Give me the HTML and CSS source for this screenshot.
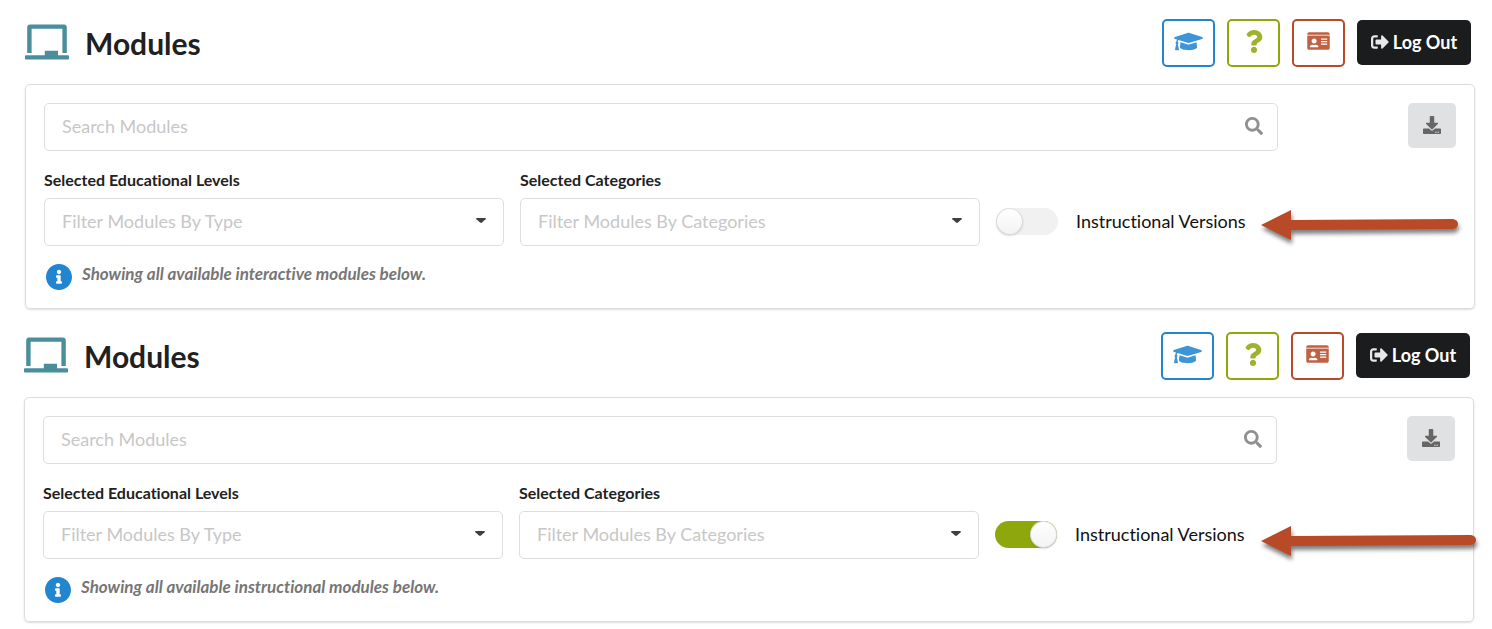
FILE: index.html
```
<!DOCTYPE html>
<html lang="en">
<head>
    <meta charset="UTF-8">
    <meta name="viewport" content="width=device-width, initial-scale=1.0">
    <title>Modules</title>
    <link rel="stylesheet" href="styles.css">
</head>
<body>
    <svg class="sprite" aria-hidden="true">
        <symbol id="board" viewBox="0 0 640 512"><path d="M96 64h448v352h64V40c0-22.06-17.94-40-40-40H72C49.94 0 32 17.94 32 40v376h64V64zm528 384H480v-64H288v64H16c-8.84 0-16 7.16-16 16v32c0 8.84 7.16 16 16 16h608c8.84 0 16-7.16 16-16v-32c0-8.84-7.16-16-16-16z"/></symbol>
        <symbol id="cap" viewBox="0 0 640 512"><path d="M622.34 153.2L343.4 67.5c-15.2-4.67-31.6-4.67-46.79 0L17.66 153.2c-23.54 7.23-23.54 38.36 0 45.59l48.63 14.94c-10.67 13.19-17.23 29.28-17.88 46.9C38.78 266.15 32 276.11 32 288c0 10.78 5.68 19.85 13.86 25.65L20.33 428.53C18.11 438.52 25.71 448 35.94 448h56.11c10.24 0 17.84-9.48 15.62-19.47L82.14 313.65C90.32 307.85 96 298.78 96 288c0-11.57-6.47-21.25-15.66-26.87.76-15.02 8.44-28.3 20.69-36.72L296.6 284.5c9.06 2.78 26.44 6.25 46.79 0l278.95-85.7c23.55-7.24 23.55-38.36 0-45.6zM352.79 315.09c-28.53 8.76-52.84 3.92-65.59 0l-145.02-44.55L128 384c0 35.35 85.96 64 192 64s192-28.65 192-64l-14.18-113.47-145.03 44.56z"/></symbol>
        <symbol id="question" viewBox="0 0 384 512"><path d="M202.021 0C122.202 0 70.503 32.703 29.914 91.026c-7.363 10.58-5.093 25.086 5.178 32.874l43.138 32.709c10.373 7.865 25.132 6.026 33.253-4.148 25.049-31.381 43.63-49.449 82.757-49.449 30.764 0 68.816 19.799 68.816 49.631 0 22.552-18.617 34.134-48.993 51.164-35.423 19.86-82.299 44.576-82.299 106.405V320c0 13.255 10.745 24 24 24h72.471c13.255 0 24-10.745 24-24v-5.773c0-42.86 125.268-44.645 125.268-160.627C377.504 66.256 286.902 0 202.021 0zM192 373.459c-38.196 0-69.271 31.075-69.271 69.271 0 38.195 31.075 69.27 69.271 69.27s69.271-31.075 69.271-69.271-31.075-69.27-69.271-69.27z"/></symbol>
        <symbol id="id-card" viewBox="0 0 576 512"><path opacity="0.45" d="M0 96h576v32H0z"/><path fill-rule="evenodd" d="M528 32H48C21.5 32 0 53.5 0 80v16h576V80c0-26.5-21.5-48-48-48zM0 432c0 26.5 21.5 48 48 48h480c26.5 0 48-21.5 48-48V128H0v304zM360 192h144q8 0 8 8v16q0 8-8 8H360q-8 0-8-8v-16q0-8 8-8zM360 256h144q8 0 8 8v16q0 8-8 8H360q-8 0-8-8v-16q0-8 8-8zM360 320h144q8 0 8 8v16q0 8-8 8H360q-8 0-8-8v-16q0-8 8-8zM176 192c35.3 0 64 28.7 64 64s-28.7 64-64 64-64-28.7-64-64 28.7-64 64-64zM67.1 396.2C75.5 370.5 99.6 352 128 352h8.2c12.3 5.1 25.7 8 39.8 8s27.6-2.9 39.8-8h8.2c28.4 0 52.5 18.5 60.9 44.2 3.2 9.9-5.2 19.8-15.6 19.8H82.7c-10.4 0-18.8-10-15.6-19.8z"/></symbol>
        <symbol id="sign-out" viewBox="0 0 512 512"><path d="M497 273L329 441c-15 15-41 4.5-41-17v-96H152c-13.3 0-24-10.7-24-24v-96c0-13.3 10.7-24 24-24h136V88c0-21.4 25.9-32 41-17l168 168c9.3 9.4 9.3 24.6 0 34zM192 436v-40c0-6.6-5.4-12-12-12H96c-17.7 0-32-14.3-32-32V160c0-17.7 14.3-32 32-32h84c6.6 0 12-5.4 12-12V76c0-6.6-5.4-12-12-12H96c-53 0-96 43-96 96v192c0 53 43 96 96 96h84c6.6 0 12-5.4 12-12z"/></symbol>
        <symbol id="search" viewBox="0 0 512 512"><path d="M505 442.7L405.3 343c-4.5-4.5-10.6-7-17-7H372c27.6-35.3 44-79.7 44-128C416 93.1 322.9 0 208 0S0 93.1 0 208s93.1 208 208 208c48.3 0 92.7-16.4 128-44v16.3c0 6.4 2.5 12.5 7 17l99.7 99.7c9.4 9.4 24.6 9.4 33.9 0l28.3-28.3c9.4-9.4 9.4-24.6.1-34zM208 336c-70.7 0-128-57.2-128-128 0-70.7 57.2-128 128-128 70.7 0 128 57.2 128 128 0 70.7-57.2 128-128 128z"/></symbol>
        <symbol id="download" viewBox="0 0 512 512"><path d="M216 0h80c13.3 0 24 10.7 24 24v168h87.7c17.8 0 26.7 21.5 14.1 34.1L269.7 378.3c-7.5 7.5-19.8 7.5-27.3 0L90.1 226.1c-12.6-12.6-3.7-34.1 14.1-34.1H192V24c0-13.3 10.7-24 24-24zm296 376v112c0 13.3-10.7 24-24 24H24c-13.3 0-24-10.7-24-24V376c0-13.3 10.7-24 24-24h146.7l49 49c20.1 20.1 52.5 20.1 72.6 0l49-49H488c13.3 0 24 10.7 24 24zm-124 88c0-11-9-20-20-20s-20 9-20 20 9 20 20 20 20-9 20-20zm64 0c0-11-9-20-20-20s-20 9-20 20 9 20 20 20 20-9 20-20z"/></symbol>
        <symbol id="caret" viewBox="0 0 10 6"><path d="M1 0h8q1.500 0 .6 1.300L6 4.600q-1 .8-2 0L.4 1.300Q-.5 0 1 0z"/></symbol>
        <symbol id="info" viewBox="8 8 496 496"><path d="M256 8C119.043 8 8 119.083 8 256c0 136.997 111.043 248 248 248s248-111.003 248-248C504 119.083 392.957 8 256 8zm0 110c23.196 0 42 18.804 42 42s-18.804 42-42 42-42-18.804-42-42 18.804-42 42-42zm56 254c0 6.627-5.373 12-12 12h-88c-6.627 0-12-5.373-12-12v-24c0-6.627 5.373-12 12-12h12v-64h-12c-6.627 0-12-5.373-12-12v-24c0-6.627 5.373-12 12-12h64c6.627 0 12 5.373 12 12v100h12c6.627 0 12 5.373 12 12v24z"/></symbol>
    </svg>

    <section class="screen">
        <header class="header">
            <svg class="logo"><use href="#board"/></svg>
            <h1>Modules</h1>
            <button class="btn blue" aria-label="Courses"><svg class="cap-icon"><use href="#cap"/></svg></button>
            <button class="btn green" aria-label="Help"><svg class="question-icon"><use href="#question"/></svg></button>
            <button class="btn red" aria-label="Profile"><svg class="card-icon"><use href="#id-card"/></svg></button>
            <button class="logout"><svg><use href="#sign-out"/></svg>Log Out</button>
        </header>
        <div class="panel">
            <div class="search-row">
                <div class="control search">
                    <input type="text" placeholder="Search Modules" aria-label="Search Modules">
                    <svg class="search-icon"><use href="#search"/></svg>
                </div>
                <button class="download" aria-label="Download"><svg><use href="#download"/></svg></button>
            </div>
            <div class="filters">
                <div class="field">
                    <label for="levels-1">Selected Educational Levels</label>
                    <div class="control">
                        <select id="levels-1"><option>Filter Modules By Type</option></select>
                        <svg class="caret"><use href="#caret"/></svg>
                    </div>
                </div>
                <div class="field">
                    <label for="categories-1">Selected Categories</label>
                    <div class="control">
                        <select id="categories-1"><option>Filter Modules By Categories</option></select>
                        <svg class="caret"><use href="#caret"/></svg>
                    </div>
                </div>
                <label class="toggle"><input type="checkbox">Instructional Versions</label>
            </div>
            <p class="message"><svg><use href="#info"/></svg><em>Showing all available interactive modules below.</em></p>
        </div>
        <svg class="arrow arrow-off" viewBox="0 0 197 30" aria-hidden="true">
            <path d="M0 15L30 0v10L192 9q5 1 5 5t-5 5L30 20v10z"/>
        </svg>
    </section>

    <section class="screen">
        <header class="header">
            <svg class="logo"><use href="#board"/></svg>
            <h1>Modules</h1>
            <button class="btn blue" aria-label="Courses"><svg class="cap-icon"><use href="#cap"/></svg></button>
            <button class="btn green" aria-label="Help"><svg class="question-icon"><use href="#question"/></svg></button>
            <button class="btn red" aria-label="Profile"><svg class="card-icon"><use href="#id-card"/></svg></button>
            <button class="logout"><svg><use href="#sign-out"/></svg>Log Out</button>
        </header>
        <div class="panel">
            <div class="search-row">
                <div class="control search">
                    <input type="text" placeholder="Search Modules" aria-label="Search Modules">
                    <svg class="search-icon"><use href="#search"/></svg>
                </div>
                <button class="download" aria-label="Download"><svg><use href="#download"/></svg></button>
            </div>
            <div class="filters">
                <div class="field">
                    <label for="levels-2">Selected Educational Levels</label>
                    <div class="control">
                        <select id="levels-2"><option>Filter Modules By Type</option></select>
                        <svg class="caret"><use href="#caret"/></svg>
                    </div>
                </div>
                <div class="field">
                    <label for="categories-2">Selected Categories</label>
                    <div class="control">
                        <select id="categories-2"><option>Filter Modules By Categories</option></select>
                        <svg class="caret"><use href="#caret"/></svg>
                    </div>
                </div>
                <label class="toggle"><input type="checkbox" checked>Instructional Versions</label>
            </div>
            <p class="message"><svg><use href="#info"/></svg><em>Showing all available instructional modules below.</em></p>
        </div>
        <svg class="arrow arrow-on" viewBox="0 0 215 30" aria-hidden="true">
            <path d="M0 15L30 0v10L210 9q5 1 5 5t-5 5L30 20v10z"/>
        </svg>
    </section>
</body>
</html>
```

FILE: styles.css
```
* {
    box-sizing: border-box;
}
body {
    margin: 0;
    background: #fff;
    color: #212121;
    font-family: Lato, "Liberation Sans", sans-serif;
    font-size: 18px;
    font-variant-ligatures: none;
}
button, input, select {
    font: inherit;
    font-variant-ligatures: none;
}
button {
    cursor: pointer;
}
svg {
    fill: currentColor;
    flex: none;
}
.sprite {
    display: none;
}
.screen {
    position: relative;
    padding: 19px 17px 4px 25px;
}
.screen + .screen {
    padding-right: 18px;
    padding-left: 24px;
}
.header {
    display: flex;
    align-items: flex-start;
    gap: 12px;
    padding-right: 4px;
    height: 65px;
}
.logo {
    width: 44px;
    height: 36px;
    margin-top: 5px;
    color: #4a8d9b;
}
h1 {
    flex: 1;
    margin: 5px 0 0 4px;
    font-size: 30px;
    line-height: 38px;
    font-weight: 700;
}
.btn {
    display: flex;
    justify-content: center;
    align-items: center;
    width: 53px;
    height: 48px;
    padding: 0 0 4px;
    background: #fff;
    border: 2px solid;
    border-radius: 5px;
}
.btn svg {
    opacity: 0.87;
}
.blue {
    color: #2185d0;
}
.green {
    color: #8ea80c;
}
.red {
    color: #b84a28;
}
.cap-icon {
    width: 29px;
    height: 23px;
}
.question-icon {
    width: 18px;
    height: 23px;
}
.card-icon {
    width: 23px;
    height: 20px;
}
.logout {
    display: flex;
    align-items: center;
    justify-content: center;
    gap: 4px;
    width: 114px;
    height: 45px;
    margin-top: 1px;
    padding: 0 0 2px;
    border: none;
    border-radius: 5px;
    background: #1b1c1d;
    color: #fff;
    font-weight: 700;
    white-space: nowrap;
}
.logout svg {
    width: 18px;
    height: 18px;
    opacity: 0.9;
}
.panel {
    padding: 18px;
    border: 1px solid #dcdddd;
    border-radius: 5px;
    box-shadow: 0 1px 2px rgba(34, 36, 38, 0.15);
}
.search-row {
    display: grid;
    grid-template-columns: repeat(16, 1fr);
    gap: 16px;
}
.search {
    grid-column: span 14;
}
.control {
    position: relative;
}
.control input, .control select {
    display: block;
    width: 100%;
    height: 48px;
    padding: 0 17px 2px;
    border: 1px solid #dededf;
    border-radius: 5px;
    background: #fff;
    color: #c7c7c7;
    appearance: none;
}
.control input::placeholder {
    color: #c7c7c7;
}
.control svg {
    position: absolute;
    top: 0;
    bottom: 2px;
    margin: auto 0;
    pointer-events: none;
}
.search-icon {
    right: 15px;
    width: 18px;
    height: 18px;
    color: #909090;
}
.caret {
    right: 18px;
    width: 10px;
    height: 6px;
    color: #404040;
}
.download {
    grid-column: span 2;
    justify-self: end;
    width: 48px;
    height: 45px;
    padding: 0 0 1px;
    border: none;
    border-radius: 5px;
    background: #e0e1e2;
    color: #666;
}
.download svg {
    display: block;
    width: 18px;
    height: 18px;
    margin: auto;
}
.filters {
    display: grid;
    grid-template-columns: repeat(3, 1fr);
    gap: 16px;
    margin-top: 18px;
}
.field label {
    display: block;
    margin-bottom: 7px;
    font-size: 16px;
    line-height: 22px;
    font-weight: 700;
}
.toggle {
    display: flex;
    align-items: center;
    align-self: end;
    gap: 18px;
    height: 48px;
    padding-bottom: 2px;
    color: #111;
    cursor: pointer;
}
.toggle input {
    display: flex;
    width: 62px;
    height: 27px;
    margin: 0;
    border-radius: 14px;
    background: #f1f1f1;
    appearance: none;
}
.toggle input::before {
    content: "";
    width: 27px;
    height: 27px;
    border-radius: 50%;
    background: linear-gradient(#fff, #f3f3f3);
    box-shadow: 0 1px 2px rgba(34, 36, 38, 0.15), inset 0 0 0 1px rgba(34, 36, 38, 0.15);
}
.toggle input:checked {
    justify-content: flex-end;
    background: #8ea80c;
}
.message {
    display: flex;
    gap: 10px;
    margin: 17px 0 0;
    padding-left: 2px;
    color: #767676;
    font-size: 17px;
    font-weight: 700;
    line-height: 22px;
}
.message svg {
    width: 26px;
    height: 26px;
    margin-top: 1px;
    color: #2185d0;
}
.arrow {
    position: absolute;
    left: 1261px;
    height: 30px;
    overflow: visible;
    color: #b84a28;
    filter: drop-shadow(1px 4px 2px rgba(0, 0, 0, 0.5));
}
.arrow-off {
    top: 210px;
    width: 197px;
}
.arrow-on {
    top: 213px;
    width: 215px;
}
```
